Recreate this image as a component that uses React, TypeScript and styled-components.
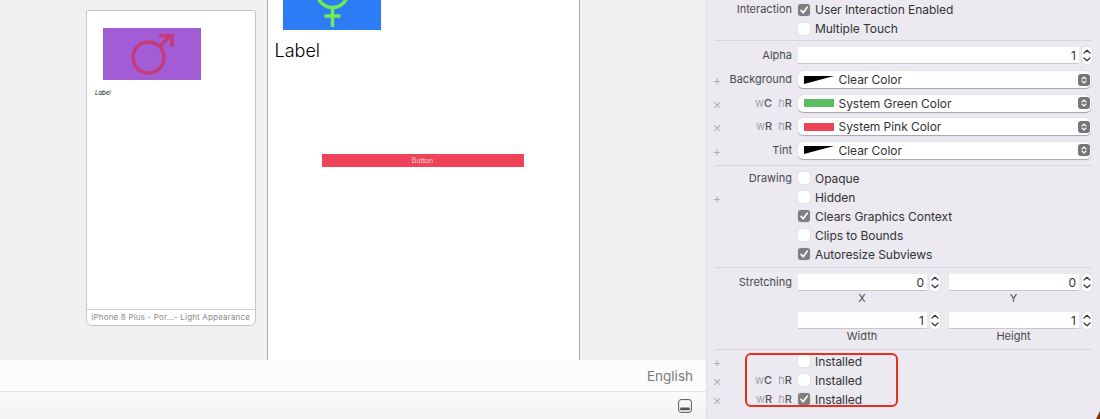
import { createGlobalStyle, styled } from "styled-components";
import type { ReactNode } from "react";

const GlobalStyle = createGlobalStyle`
  html, body {
    margin: 0;
    padding: 0;
    width: 1100px;
    height: 419px;
    overflow: hidden;
    background: #f0f0f0;
    font-family: "Inter", "Liberation Sans", sans-serif;
    -webkit-font-smoothing: antialiased;
  }
`;

const Window = styled.div`
  display: grid;
  grid-template-columns: 706px 394px;
  width: 1100px;
  height: 419px;
  overflow: hidden;
`;

const Editor = styled.div`
  display: flex;
  flex-direction: column;
  height: 419px;
`;

const Canvas = styled.div`
  display: flex;
  align-items: flex-start;
  height: 360px;
  padding-left: 86px;
  background: #f0f0f0;
  box-sizing: border-box;
`;

const PreviewCard = styled.div`
  display: flex;
  flex-direction: column;
  width: 169.5px;
  height: 316px;
  margin-top: 10px;
  box-sizing: border-box;
  border: 1.5px solid #c6c6c6;
  border-radius: 2px 2px 6px 6px;
  background: #fff;
`;

const PreviewBody = styled.div`
  flex: 1;
  padding: 16.5px 0 0 15.5px;
`;

const PreviewImage = styled.div`
  display: flex;
  width: 98px;
  height: 52px;
  background: #a25dd6;
`;

const PreviewLabel = styled.div`
  margin: 8px 0 0 -7.5px;
  font-size: 6px;
  line-height: 10px;
  font-style: italic;
  color: #111;
`;

const PreviewFooter = styled.div`
  height: 15px;
  border-top: 1.5px solid #cdcdcd;
  font-size: 8px;
  line-height: 14px;
  text-align: center;
  letter-spacing: 0.17px;
  color: #8b8b8b;
  white-space: nowrap;
`;

const Phone = styled.div`
  width: 313px;
  height: 360px;
  margin-left: 11.5px;
  box-sizing: border-box;
  border-left: 1.5px solid #aaa;
  border-right: 1.5px solid #aaa;
  background: #fff;
`;

const BlueImage = styled.div`
  display: flex;
  width: 98px;
  height: 30px;
  margin-left: 14.5px;
  background: #2e7bf6;
`;

const PhoneLabel = styled.div`
  margin: 9.5px 0 0 6.5px;
  font-size: 18px;
  line-height: 22px;
  font-weight: 300;
  color: #000;
`;

const PinkButton = styled.div`
  width: 202px;
  height: 13px;
  margin: 92.5px 0 0 53.5px;
  background: #ee4359;
  font-size: 7px;
  line-height: 13px;
  text-align: center;
  color: #fbd5da;
`;

const LocaleBar = styled.div`
  display: flex;
  justify-content: flex-end;
  align-items: center;
  height: 31px;
  padding-right: 13px;
  border-bottom: 1px solid #e3e3e3;
  background: #fbfbfb;
  font-size: 13.5px;
  color: #7a7a7a;
`;

const StatusBar = styled.div`
  flex: 1;
  display: flex;
  justify-content: flex-end;
  align-items: center;
  padding-right: 14px;
  background: linear-gradient(#fbfbfb, #f2f2f2);
`;

const Inspector = styled.div`
  position: relative;
  box-sizing: border-box;
  height: 419px;
  padding-right: 8px;
  border-left: 1px solid #dddce2;
  background: #ece9f1;
  font-size: 12px;
  color: #333;
`;

const Row = styled.div<{ $height?: number; $gap?: number; $top?: boolean }>`
  display: grid;
  grid-template-columns: 20px 65px 1fr;
  align-items: ${(p) => (p.$top ? "start" : "center")};
  height: ${(p) => p.$height ?? 19}px;
  margin-bottom: ${(p) => p.$gap ?? 0}px;
`;

const Marker = styled.span`
  font-size: 14px;
  line-height: 15px;
  font-weight: 300;
  text-align: center;
  color: #a9a7ae;
`;

const RowLabel = styled.span`
  font-size: 11px;
  line-height: 17px;
  text-align: right;
  color: #4a4a4a;
  white-space: nowrap;
`;

const SizeClass = styled.span`
  font-weight: 500;
  color: #55535a;
`;

const SizePrefix = styled.span`
  font-weight: 400;
  color: #a3a1a8;
`;

const Control = styled.div`
  display: flex;
  align-items: center;
  margin-left: 6px;
  min-width: 0;
`;

const Divider = styled.div<{ $top: number; $bottom: number }>`
  height: 1px;
  margin: ${(p) => p.$top}px 0 ${(p) => p.$bottom}px 8px;
  background: #d8d5dc;
`;

const CheckBox = styled.span<{ $checked?: boolean }>`
  display: flex;
  align-items: center;
  justify-content: center;
  flex: none;
  width: 12px;
  height: 12px;
  border-radius: 3px;
  background: ${(p) => (p.$checked ? "#807e83" : "#fff")};
  box-shadow: 0 0 1px rgba(0, 0, 0, 0.3);
`;

const CheckText = styled.span`
  margin-left: 5px;
  letter-spacing: -0.05px;
  color: #333;
  white-space: nowrap;
`;

const Field = styled.div`
  flex: 1;
  height: 17px;
  box-sizing: border-box;
  padding-right: 3px;
  background: #fff;
  border-bottom: 1px solid #c9c7cc;
  font-size: 12px;
  line-height: 17px;
  text-align: right;
  color: #333;
`;

const Stepper = styled.div`
  display: flex;
  flex: none;
  width: 10px;
  height: 17px;
  margin-left: 3px;
  border-radius: 4px;
  background: #fff;
  box-shadow: 0 0 1px rgba(0, 0, 0, 0.3);
`;

const Select = styled.div`
  display: flex;
  align-items: center;
  width: 293px;
  height: 17px;
  box-sizing: border-box;
  padding: 0 1.5px 0 6px;
  border-radius: 5px;
  background: #fff;
  box-shadow: 0 0.5px 1px rgba(0, 0, 0, 0.3);
`;

const Swatch = styled.span<{ $color?: string }>`
  display: flex;
  flex: none;
  width: 30px;
  height: 8px;
  background: ${(p) => p.$color ?? "#fff"};
`;

const SelectText = styled.span`
  flex: 1;
  margin-left: 4.5px;
  letter-spacing: -0.05px;
  color: #333;
`;

const PopupArrows = styled.span`
  display: flex;
  flex: none;
  width: 12px;
  height: 12px;
  border-radius: 3px;
  background: #77757a;
`;

const StretchGrid = styled.div`
  display: grid;
  grid-template-columns: 142px 143px;
  column-gap: 9px;
`;

const StretchCell = styled.div`
  display: flex;
  flex-direction: column;
`;

const FieldLine = styled.div`
  display: flex;
`;

const Caption = styled.div`
  height: 21px;
  padding-right: 14px;
  font-size: 11px;
  line-height: 14px;
  text-align: center;
  color: #4a4a4a;
`;

const Highlight = styled.div`
  position: absolute;
  left: 38px;
  top: 353px;
  width: 153px;
  height: 54px;
  box-sizing: border-box;
  border: 2px solid #e8301f;
  border-radius: 6px;
`;

const WindowCorner = styled.div`
  position: absolute;
  right: 0;
  bottom: 0;
  width: 4px;
  height: 8px;
  background: #7a3410;
  clip-path: polygon(100% 0, 100% 100%, 0 100%);
`;

const CheckMark = () => (
  <svg width="10" height="10" viewBox="0 0 10 10" fill="none">
    <path d="M2 5.4 L4.2 7.8 L8.2 2.2" stroke="#fff" strokeWidth="1.6" strokeLinecap="round" strokeLinejoin="round" />
  </svg>
);

const StepArrows = () => (
  <svg width="10" height="17" viewBox="0 0 10 17" fill="none">
    <path d="M2 6 L5 3.3 L8 6 M2 11 L5 13.7 L8 11" stroke="#333" strokeWidth="1.2" strokeLinecap="round" strokeLinejoin="round" />
  </svg>
);

const PopupGlyph = () => (
  <svg width="12" height="12" viewBox="0 0 12 12" fill="none">
    <path d="M4 5 L6 3 L8 5 M4 7 L6 9 L8 7" stroke="#fff" strokeWidth="1.1" strokeLinecap="round" strokeLinejoin="round" />
  </svg>
);

const ClearSwatch = () => (
  <svg width="30" height="8" viewBox="0 0 30 8">
    <rect width="30" height="8" fill="#fff" />
    <polygon points="0,0 30,0 0,8" fill="#000" />
  </svg>
);

const MaleSymbol = () => (
  <svg width="98" height="52" viewBox="0 0 98 52" fill="none" stroke="#c73a78" strokeWidth="3.5">
    <circle cx="45.5" cy="29.5" r="15.5" />
    <path d="M57 18 L68 7" />
    <path d="M56 7.5 H69 V19" />
  </svg>
);

const FemaleSymbol = () => (
  <svg width="98" height="30" viewBox="0 0 98 30" fill="none" stroke="#72ea52" strokeWidth="3.5">
    <circle cx="49.5" cy="-8" r="15.5" />
    <path d="M49.5 9 V27 M41.5 16 H57.5" />
  </svg>
);

const PanelIcon = () => (
  <svg width="14" height="14" viewBox="0 0 14 14" fill="none">
    <rect x="0.6" y="0.6" width="12.8" height="12.8" rx="2.5" stroke="#555" strokeWidth="1" />
    <rect x="2.2" y="8.5" width="9.6" height="2.8" rx="0.5" fill="#555" />
  </svg>
);

const SizeTag = ({ w, h }: { w: string; h: string }) => (
  <>
    <SizePrefix>w</SizePrefix>
    <SizeClass>{w}</SizeClass>
    {"  "}
    <SizePrefix>&nbsp;h</SizePrefix>
    <SizeClass>{h}</SizeClass>
  </>
);

const CheckRow = ({
  marker,
  label,
  checked,
  text,
}: {
  marker?: string;
  label?: ReactNode;
  checked?: boolean;
  text: string;
}) => (
  <Row>
    <Marker>{marker}</Marker>
    <RowLabel>{label}</RowLabel>
    <Control>
      <CheckBox $checked={checked}>{checked && <CheckMark />}</CheckBox>
      <CheckText>{text}</CheckText>
    </Control>
  </Row>
);

const ColorRow = ({
  marker,
  label,
  color,
  text,
  last,
}: {
  marker: string;
  label: ReactNode;
  color?: string;
  text: string;
  last?: boolean;
}) => (
  <Row $height={17} $gap={last ? 0 : 6.5}>
    <Marker>{marker}</Marker>
    <RowLabel>{label}</RowLabel>
    <Control>
      <Select>
        {color ? <Swatch $color={color} /> : <Swatch><ClearSwatch /></Swatch>}
        <SelectText>{text}</SelectText>
        <PopupArrows><PopupGlyph /></PopupArrows>
      </Select>
    </Control>
  </Row>
);

const StretchField = ({ value, caption }: { value: string; caption: string }) => (
  <StretchCell>
    <FieldLine>
      <Field>{value}</Field>
      <Stepper><StepArrows /></Stepper>
    </FieldLine>
    <Caption>{caption}</Caption>
  </StretchCell>
);

export default function App() {
  return (
    <>
      <GlobalStyle />
      <Window>
        <Editor>
          <Canvas>
            <PreviewCard>
              <PreviewBody>
                <PreviewImage><MaleSymbol /></PreviewImage>
                <PreviewLabel>Label</PreviewLabel>
              </PreviewBody>
              <PreviewFooter>iPhone 8 Plus - Por...- Light Appearance</PreviewFooter>
            </PreviewCard>
            <Phone>
              <BlueImage><FemaleSymbol /></BlueImage>
              <PhoneLabel>Label</PhoneLabel>
              <PinkButton>Button</PinkButton>
            </Phone>
          </Canvas>
          <LocaleBar>English</LocaleBar>
          <StatusBar><PanelIcon /></StatusBar>
        </Editor>
        <Inspector>
          <CheckRow label="Interaction" checked text="User Interaction Enabled" />
          <CheckRow text="Multiple Touch" />
          <Divider $top={2} $bottom={6} />
          <Row $height={17} $gap={7}>
            <span />
            <RowLabel>Alpha</RowLabel>
            <Control>
              <Field>1</Field>
              <Stepper><StepArrows /></Stepper>
            </Control>
          </Row>
          <ColorRow marker="+" label="Background" text="Clear Color" />
          <ColorRow marker="×" label={<SizeTag w="C" h="R" />} color="#5cbd62" text="System Green Color" />
          <ColorRow marker="×" label={<SizeTag w="R" h="R" />} color="#ee4359" text="System Pink Color" />
          <ColorRow marker="+" label="Tint" text="Clear Color" last />
          <Divider $top={6} $bottom={3} />
          <CheckRow label="Drawing" text="Opaque" />
          <CheckRow marker="+" text="Hidden" />
          <CheckRow checked text="Clears Graphics Context" />
          <CheckRow text="Clips to Bounds" />
          <CheckRow checked text="Autoresize Subviews" />
          <Divider $top={3} $bottom={6.5} />
          <Row $height={38} $top>
            <span />
            <RowLabel>Stretching</RowLabel>
            <Control>
              <StretchGrid>
                <StretchField value="0" caption="X" />
                <StretchField value="0" caption="Y" />
                <StretchField value="1" caption="Width" />
                <StretchField value="1" caption="Height" />
              </StretchGrid>
            </Control>
          </Row>
          <Divider $top={36.5} $bottom={2} />
          <CheckRow marker="+" text="Installed" />
          <CheckRow marker="×" label={<SizeTag w="C" h="R" />} text="Installed" />
          <CheckRow marker="×" label={<SizeTag w="R" h="R" />} checked text="Installed" />
          <Highlight />
          <WindowCorner />
        </Inspector>
      </Window>
    </>
  );
}
